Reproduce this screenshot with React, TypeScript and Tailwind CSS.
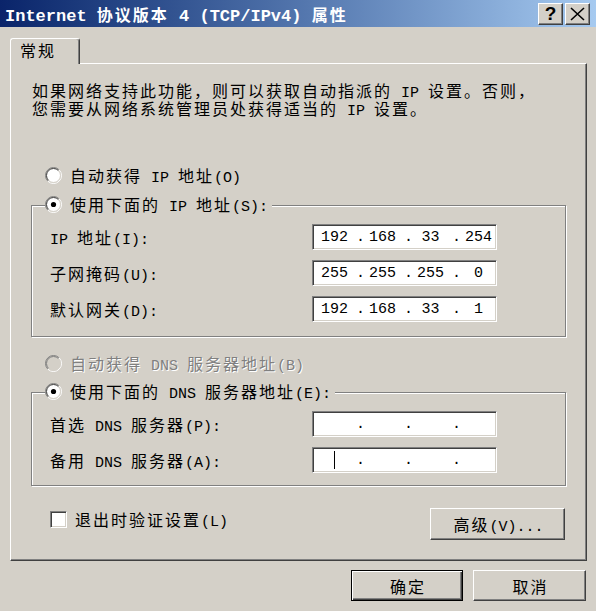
import { Fragment, type ReactNode } from "react";
import clsx from "clsx";

const LATIN = "inline-block font-['Liberation_Mono',monospace] text-[15px] leading-[12px]";
const CJK = "inline-block h-[18px] leading-[18px] tracking-[2px]";

// SimSun-like run splitting: ASCII goes half width, CJK full width
function Txt({ s, latin = LATIN, cjk = CJK }: { s: string; latin?: string; cjk?: string }) {
  const parts = s.split(/([\x20-\x7e]+)/).filter((p) => p !== "");
  return (
    <span className="whitespace-pre">
      {parts.map((p, i) =>
        /^[\x20-\x7e]+$/.test(p) ? (
          <span key={i} className={latin}>
            {p}
          </span>
        ) : (
          <span key={i} className={cjk}>
            {p}
          </span>
        )
      )}
    </span>
  );
}

function Radio({ checked, disabled }: { checked?: boolean; disabled?: boolean }) {
  return (
    <svg width="17" height="17" viewBox="0 0 17 17" className="shrink-0">
      <circle cx="8.5" cy="8.5" r="7" fill={disabled ? "#d4d0c8" : "#fff"} />
      <path d="M14.16 2.84 A8 8 0 0 0 2.84 14.16" fill="none" stroke="#808080" />
      <path d="M13.45 3.55 A7 7 0 0 0 3.55 13.45" fill="none" stroke={disabled ? "#808080" : "#404040"} />
      <path d="M14.16 2.84 A8 8 0 0 1 2.84 14.16" fill="none" stroke="#fff" />
      <path d="M13.45 3.55 A7 7 0 0 1 3.55 13.45" fill="none" stroke="#d4d0c8" />
      {checked ? <circle cx="8.5" cy="8.5" r="2.6" fill="#000" /> : null}
    </svg>
  );
}

function IpBox({ parts, caret }: { parts?: string[]; caret?: boolean }) {
  const vals = parts ?? ["", "", "", ""];
  return (
    <div className="flex h-[26px] w-[185px] shrink-0 items-center border border-t-[#808080] border-l-[#808080] border-r-white border-b-white bg-white pl-[4px] shadow-[inset_1px_1px_0_#404040,inset_-1px_-1px_0_#d4d0c8]">
      {vals.map((v, i) => (
        <Fragment key={i}>
          <span className="flex h-[18px] w-[35px] items-center justify-center font-['Liberation_Mono',monospace] text-[15px] leading-[15px]">
            {v}
            {caret && i === 0 ? <span className="h-[18px] w-px bg-black" /> : null}
          </span>
          {i < 3 ? (
            <span className="w-[13px] pl-[4px] font-['Liberation_Mono',monospace] text-[15px] leading-[15px]">.</span>
          ) : null}
        </Fragment>
      ))}
    </div>
  );
}

function Btn({ children, primary, className }: { children: ReactNode; primary?: boolean; className?: string }) {
  return (
    <button
      type="button"
      className={clsx(
        "flex items-center justify-center bg-[#d4d0c8] pl-[2px] leading-[18px]",
        primary
          ? "border border-black shadow-[inset_1px_1px_0_#fff,inset_-1px_-1px_0_#404040,inset_-2px_-2px_0_#808080]"
          : "border border-t-white border-l-white border-r-[#404040] border-b-[#404040] shadow-[inset_-1px_-1px_0_#808080]",
        className
      )}
    >
      {children}
    </button>
  );
}

function Row({ label, parts, caret }: { label: string; parts?: string[]; caret?: boolean }) {
  return (
    <div className="flex items-center">
      <div className="h-[18px] w-[262px]">
        <Txt s={label} />
      </div>
      <IpBox parts={parts} caret={caret} />
    </div>
  );
}

function Group({ legend, height, children }: { legend: string; height: string; children: ReactNode }) {
  return (
    <div className="ml-[20px] w-[535px]">
      <div className="relative z-10 ml-[14px] flex h-[18px] w-fit items-center gap-[8px] bg-[#d4d0c8] pr-[4px]">
        <Radio checked />
        <Txt s={legend} />
      </div>
      <div
        className={clsx(
          "-mt-[8px] border border-[#808080] pl-[18px] pt-[18px] shadow-[inset_1px_1px_0_#fff,1px_1px_0_#fff]",
          height
        )}
      >
        <div className="flex flex-col gap-[10px]">{children}</div>
      </div>
    </div>
  );
}

export default function App() {
  return (
    <div className="h-[611px] w-[596px] overflow-hidden bg-[#d4d0c8] font-['Noto_Sans_CJK_SC',sans-serif] text-[16px] leading-[18px] text-black">
      <div className="flex h-[27px] items-center bg-linear-to-r from-[#0a246a] to-[#a6caf0] pl-[5px] pr-[6px]">
        <div className="h-[18px] font-bold text-white">
          <Txt
            s="Internet 协议版本 4 (TCP/IPv4) 属性"
            latin="inline-block font-['Liberation_Mono',monospace] text-[17px] leading-[13px]"
          />
        </div>
        <div className="ml-auto flex gap-[2px]">
          <button
            type="button"
            className="flex h-[22px] w-[25px] items-center justify-center border border-t-white border-l-white border-r-[#404040] border-b-[#404040] bg-[#d4d0c8] font-['Liberation_Sans',sans-serif] text-[19px] font-bold leading-none shadow-[inset_-1px_-1px_0_#808080]"
          >
            ?
          </button>
          <button
            type="button"
            className="flex h-[22px] w-[25px] items-center justify-center border border-t-white border-l-white border-r-[#404040] border-b-[#404040] bg-[#d4d0c8] shadow-[inset_-1px_-1px_0_#808080]"
          >
            <svg width="15" height="14" viewBox="0 0 15 14">
              <path d="M1 1 L14 13 M14 1 L1 13" stroke="#000" strokeWidth="1.6" fill="none" />
            </svg>
          </button>
        </div>
      </div>

      <div className="relative z-10 -mb-px ml-[10px] mt-[11px] h-[26px] w-[70px] rounded-t-[3px] border-l border-t border-r border-white border-r-[#404040] bg-[#d4d0c8] pl-[9px] pt-[2px] shadow-[inset_-1px_0_0_#808080]">
        <Txt s="常规" />
      </div>

      <div className="ml-[10px] h-[498px] w-[577px] border border-t-white border-l-white border-r-[#404040] border-b-[#404040] shadow-[inset_-1px_-1px_0_#808080]">
        <div className="ml-[21px] mt-[17px]">
          <div className="h-[18px]">
            <Txt s="如果网络支持此功能，则可以获取自动指派的 IP 设置。否则，" />
          </div>
          <div className="h-[18px]">
            <Txt s="您需要从网络系统管理员处获得适当的 IP 设置。" />
          </div>
        </div>

        <div className="ml-[34px] mt-[49px] flex h-[18px] items-center gap-[8px]">
          <Radio />
          <Txt s="自动获得 IP 地址(O)" />
        </div>

        <div className="mt-[11px]">
          <Group legend="使用下面的 IP 地址(S):" height="h-[132px]">
            <Row label="IP 地址(I):" parts={["192", "168", "33", "254"]} />
            <Row label="子网掩码(U):" parts={["255", "255", "255", "0"]} />
            <Row label="默认网关(D):" parts={["192", "168", "33", "1"]} />
          </Group>
        </div>

        <div className="ml-[34px] mt-[17px] flex h-[18px] items-center gap-[8px] text-[#808080] [text-shadow:1px_1px_0_#fff]">
          <Radio disabled />
          <Txt s="自动获得 DNS 服务器地址(B)" />
        </div>

        <div className="mt-[10px]">
          <Group legend="使用下面的 DNS 服务器地址(E):" height="h-[94px]">
            <Row label="首选 DNS 服务器(P):" />
            <Row label="备用 DNS 服务器(A):" caret />
          </Group>
        </div>

        <div className="ml-[20px] mt-[22px] flex w-[534px] items-start justify-between">
          <div className="ml-[19px] mt-[2px] flex h-[18px] items-center gap-[8px]">
            <div className="h-[17px] w-[17px] border border-t-[#808080] border-l-[#808080] border-r-white border-b-white bg-white shadow-[inset_1px_1px_0_#404040,inset_-1px_-1px_0_#d4d0c8]" />
            <Txt s="退出时验证设置(L)" />
          </div>
          <Btn className="h-[32px] w-[135px]">
            <Txt s="高级(V)..." />
          </Btn>
        </div>
      </div>

      <div className="mt-[9px] flex justify-end gap-[10px] pr-[10px]">
        <Btn primary className="h-[31px] w-[112px]">
          <Txt s="确定" />
        </Btn>
        <Btn className="h-[31px] w-[113px]">
          <Txt s="取消" />
        </Btn>
      </div>
    </div>
  );
}
